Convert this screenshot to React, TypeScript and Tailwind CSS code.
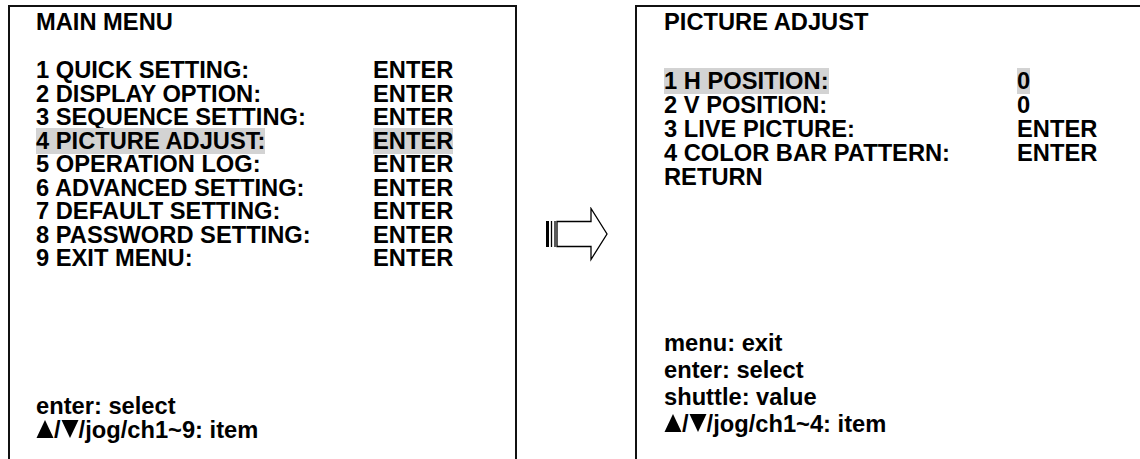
import React from "react";

type Row = { label: string; value: string; active?: boolean };

const mainRows: Row[] = [
  { label: "1 QUICK SETTING:", value: "ENTER" },
  { label: "2 DISPLAY OPTION:", value: "ENTER" },
  { label: "3 SEQUENCE SETTING:", value: "ENTER" },
  { label: "4 PICTURE ADJUST:", value: "ENTER", active: true },
  { label: "5 OPERATION LOG:", value: "ENTER" },
  { label: "6 ADVANCED SETTING:", value: "ENTER" },
  { label: "7 DEFAULT SETTING:", value: "ENTER" },
  { label: "8 PASSWORD SETTING:", value: "ENTER" },
  { label: "9 EXIT MENU:", value: "ENTER" },
];

const pictureRows: Row[] = [
  { label: "1 H POSITION:", value: "0", active: true },
  { label: "2 V POSITION:", value: "0" },
  { label: "3 LIVE PICTURE:", value: "ENTER" },
  { label: "4 COLOR BAR PATTERN:", value: "ENTER" },
  { label: "RETURN", value: "" },
];

const Up = () => (
  <svg width="18" height="18" viewBox="0 0 18 18" className="inline-block align-baseline">
    <polygon points="9,0 17.5,18 0.5,18" fill="#000" />
  </svg>
);

const Down = () => (
  <svg width="18" height="18" viewBox="0 0 18 18" className="inline-block align-baseline">
    <polygon points="0.5,0 17.5,0 9,18" fill="#000" />
  </svg>
);

const Cell = ({ text, active }: { text: string; active?: boolean }) =>
  active ? <span className="bg-[#d3d3d3]">{text}</span> : <span>{text}</span>;

const MenuRows = ({ rows, valueX, leading }: { rows: Row[]; valueX: string; leading: string }) => (
  <div className={leading}>
    {rows.map((r) => (
      <div key={r.label} className="flex whitespace-nowrap">
        <div className={valueX}>
          <Cell text={r.label} active={r.active} />
        </div>
        <div>{r.value && <Cell text={r.value} active={r.active} />}</div>
      </div>
    ))}
  </div>
);

const Arrow = () => (
  <svg width="64" height="56" viewBox="0 0 64 56">
    <rect x="1" y="14" width="3" height="26" fill="#000" />
    <line x1="6.5" y1="14" x2="6.5" y2="40" stroke="#000" strokeWidth="1.3" />
    <line x1="10" y1="14" x2="10" y2="40" stroke="#000" strokeWidth="1.3" />
    <polygon
      points="12,14.5 46,14.5 46,1.5 62,27 46,52.5 46,39.5 12,39.5"
      fill="none"
      stroke="#000"
      strokeWidth="1.3"
      strokeLinejoin="miter"
    />
  </svg>
);

export default function App() {
  return (
    <div
      className="h-[459px] w-[1140px] overflow-hidden bg-white text-black font-bold text-[23.7px] flex pt-[5px] pl-[8px]"
      style={{ fontFamily: '"Liberation Sans", Arial, sans-serif' }}
    >
      {/* Main menu */}
      <div className="w-[509px] h-[480px] shrink-0 border-2 border-b-0 border-[#111] pl-[26px] pt-[4px]">
        <div className="leading-[23.5px]">MAIN MENU</div>
        <div className="mt-[24.5px]">
          <MenuRows rows={mainRows} valueX="w-[337px]" leading="leading-[23.55px]" />
        </div>
        <div className="mt-[123px] leading-[24px]">
          <div>enter: select</div>
          <div className="whitespace-nowrap">
            <Up />/<Down />/jog/ch1~9: item
          </div>
        </div>
      </div>

      {/* Arrow */}
      <div className="w-[118px] shrink-0 flex items-start justify-center pt-[202px] pl-[1px]">
        <Arrow />
      </div>

      {/* Picture adjust */}
      <div className="w-[520px] h-[480px] shrink-0 border-2 border-b-0 border-r-0 border-[#111] pl-[27px] pt-[4px]">
        <div className="leading-[23.5px]">PICTURE ADJUST</div>
        <div className="mt-[34px]">
          <MenuRows rows={pictureRows} valueX="w-[353px]" leading="leading-[24.2px]" />
        </div>
        <div className="mt-[140px] leading-[27.2px]">
          <div>menu: exit</div>
          <div>enter: select</div>
          <div>shuttle: value</div>
          <div className="whitespace-nowrap">
            <Up />/<Down />/jog/ch1~4: item
          </div>
        </div>
      </div>
    </div>
  );
}
